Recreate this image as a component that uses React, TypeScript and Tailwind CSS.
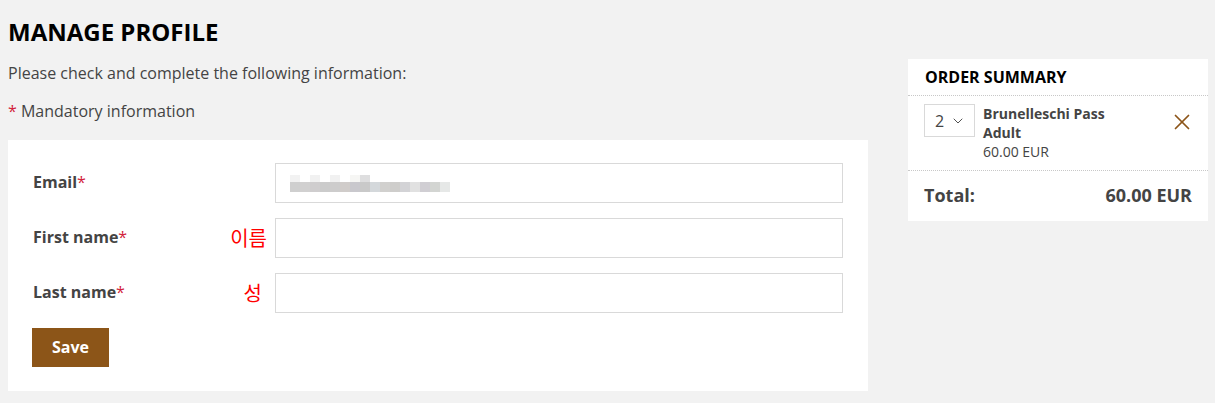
import React from 'react';
import { ChevronDown, X } from 'lucide-react';

const blurTop = ['bg-[#f2f2f2]', 'bg-white', 'bg-[#f1f1f1]', 'bg-white', 'bg-[#f1f1f1]', 'bg-white', 'bg-[#f6f6f4]', 'bg-[#dededf]'];
const blurBottom = [
  'bg-[#cfcfcf]', 'bg-[#d1d0d0]', 'bg-[#cfcdce]', 'bg-[#cbcbcb]', 'bg-[#cdcccc]', 'bg-[#d0ccca]',
  'bg-[#c9c8cd]', 'bg-[#c9c9c9]', 'bg-[#d4d8db]', 'bg-[#d1d0ce]', 'bg-[#cecdcb]', 'bg-[#d3d3d6]',
  'bg-[#e1e1e1]', 'bg-[#d0ced3]', 'bg-[#d3d5d2]', 'bg-[#e6e8e7]',
];

const Req = () => <span className="text-[#d2223a] font-normal">*</span>;

const Field: React.FC<{ label: string; hint?: string; hintPad?: string; children?: React.ReactNode }> = ({ label, hint, hintPad = '', children }) => (
  <div className="flex items-center h-10">
    <div className="w-[242px] flex items-center justify-between pr-[8px]">
      <span className="text-[16px] font-bold text-[#444] -mt-[2px]">
        {label}
        <Req />
      </span>
      {hint && (
        <span className={`text-[20px] text-[#ff0000] font-['Noto_Sans_CJK_KR','Noto_Sans',sans-serif] leading-none ${hintPad}`}>{hint}</span>
      )}
    </div>
    <div className="flex-1 h-10 border border-[#d9d9d9] bg-white flex items-center pl-[14px]">{children}</div>
  </div>
);

export default function App() {
  return (
    <div className="min-h-screen bg-[#f2f2f2] font-['Open_Sans',sans-serif] text-[#444] pl-2 pr-[7px]">
      <div className="flex gap-10">
        <div className="w-[860px] shrink-0">
          <h1 className="pt-4 text-[24px] leading-8 font-bold text-black">MANAGE PROFILE</h1>
          <p className="mt-[13px] text-[16px] leading-6">Please check and complete the following information:</p>
          <p className="mt-[14px] text-[16px] leading-6">
            <Req /> Mandatory information
          </p>
          <div className="mt-[17px] bg-white pt-[23px] pb-[24px] pl-[25px] pr-[25px] flex flex-col gap-[15px]">
            <Field label="Email">
              <div className="flex flex-col">
                <div className="flex">
                  {blurTop.map((c, i) => (
                    <div key={i} className={`w-[10px] h-[7px] ${c}`} />
                  ))}
                </div>
                <div className="flex">
                  {blurBottom.map((c, i) => (
                    <div key={i} className={`w-[10px] h-[10px] ${c}`} />
                  ))}
                </div>
              </div>
            </Field>
            <Field label="First name" hint="이름" />
            <Field label="Last name" hint="성" hintPad="mr-[5px]" />
            <div>
              <button className="ml-[-1px] bg-[#8c5518] text-white font-bold text-[16px] leading-none h-[39px] w-[77px] pb-[2px]">Save</button>
            </div>
          </div>
        </div>

        <div className="w-[300px] shrink-0 mt-[59px] self-start bg-white">
          <div className="h-9 flex items-center pl-[17px] text-[16px] font-bold text-black">ORDER SUMMARY</div>
          <div className="border-t border-dotted border-[#c8c8c8]" />
          <div className="flex pt-[8px] pb-[9px] pl-4 pr-[13px]">
            <div className="w-[51px] h-[33px] border border-[#d9d9d9] flex items-center justify-between pl-[10px] pr-[8px] text-[16px]">
              <span>2</span>
              <ChevronDown size={16} strokeWidth={1.4} className="text-[#444]" />
            </div>
            <div className="ml-[8px] flex-1 text-[14px] leading-[19px]">
              <div className="font-bold">Brunelleschi Pass</div>
              <div className="font-bold">Adult</div>
              <div>60.00 EUR</div>
            </div>
            <X size={26} strokeWidth={1.6} className="mt-[5px] text-[#8c5518]" />
          </div>
          <div className="border-t border-dotted border-[#c8c8c8]" />
          <div className="h-[50px] flex items-center justify-between pl-4 pr-4 pb-[2px] text-[18px] font-bold">
            <span>Total:</span>
            <span>60.00 EUR</span>
          </div>
        </div>
      </div>
    </div>
  );
}
